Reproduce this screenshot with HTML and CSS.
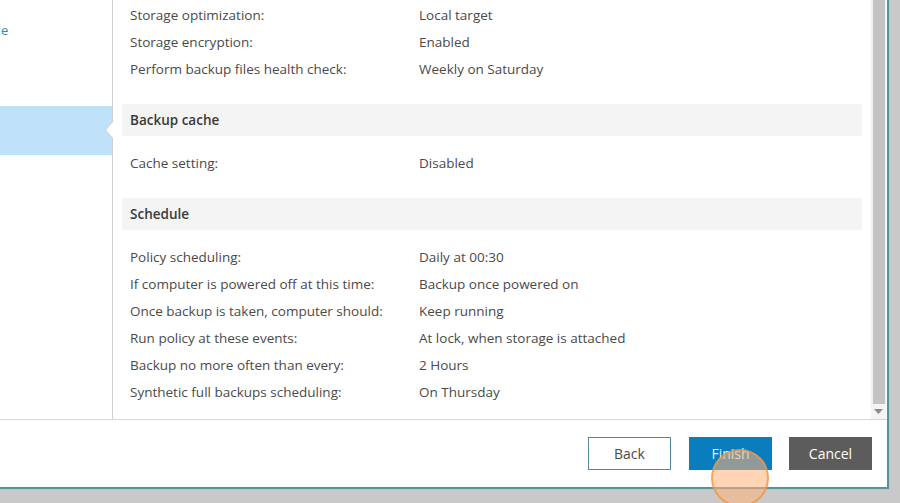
FILE: index.html
```html
<!DOCTYPE html>
<html lang="en">
<head>
<meta charset="utf-8">
<title>Backup plan wizard - Summary</title>
<link rel="stylesheet" href="styles.css">
</head>
<body>
<div class="dialog">
  <div class="main">
    <nav class="nav">
      <div class="nav-item visited">Backup schedule</div>
      <div class="nav-item">Alerts</div>
      <div class="nav-item selected">Summary</div>
    </nav>
    <div class="content">
      <div class="summary">
        <div class="rows rows-first">
          <div class="row"><span class="label">Storage optimization:</span><span class="value">Local target</span></div>
          <div class="row"><span class="label">Storage encryption:</span><span class="value">Enabled</span></div>
          <div class="row"><span class="label">Perform backup files health check:</span><span class="value">Weekly on Saturday</span></div>
        </div>
        <div class="section-title">Backup cache</div>
        <div class="rows">
          <div class="row"><span class="label">Cache setting:</span><span class="value">Disabled</span></div>
        </div>
        <div class="section-title">Schedule</div>
        <div class="rows">
          <div class="row"><span class="label">Policy scheduling:</span><span class="value">Daily at 00:30</span></div>
          <div class="row"><span class="label">If computer is powered off at this time:</span><span class="value">Backup once powered on</span></div>
          <div class="row"><span class="label">Once backup is taken, computer should:</span><span class="value">Keep running</span></div>
          <div class="row"><span class="label">Run policy at these events:</span><span class="value">At lock, when storage is attached</span></div>
          <div class="row"><span class="label">Backup no more often than every:</span><span class="value">2 Hours</span></div>
          <div class="row"><span class="label">Synthetic full backups scheduling:</span><span class="value">On Thursday</span></div>
        </div>
      </div>
      <div class="scrollbar">
        <div class="thumb"></div>
        <div class="arrow-down"><svg width="9" height="5" viewBox="0 0 9 5"><path d="M0 0H9L4.5 5Z" fill="#8a8a8a"/></svg></div>
      </div>
    </div>
  </div>
  <div class="footer">
    <button class="btn btn-back">Back</button>
    <button class="btn btn-finish">Finish</button>
    <button class="btn btn-cancel">Cancel</button>
    <span class="click-marker"></span>
  </div>
</div>
</body>
</html>
```

FILE: styles.css
```css
html, body {
  margin: 0;
  padding: 0;
  height: 100%;
  overflow: hidden;
  background: #c9c9c9;
}

body {
  font-family: "Open Sans", "Noto Sans", "DejaVu Sans", sans-serif;
  font-size: 13.5px;
  color: #4a4a4a;
}

/* dialog window, partly outside the visible area on the left */
.dialog {
  position: relative;
  margin-left: -118px;
  width: 1005px;
  height: 487px;
  background: #fff;
  border-right: 2px solid #5a909d;
  border-bottom: 2px solid #5a909d;
  display: flex;
  flex-direction: column;
  box-shadow: 1px 1px 0 #9fd0da;
}

.main {
  display: flex;
  height: 419px;
  border-bottom: 1px solid #d6d6d6;
}

/* wizard step list */
.nav {
  width: 231px;
  flex: none;
  border-right: 1px solid #d0d0d0;
  padding-top: 8px;
  box-sizing: border-box;
  position: relative;
}

.nav-item {
  height: 49px;
  padding: 14px 0 0 24px;
  box-sizing: border-box;
  font-size: 13px;
  color: #4a4a4a;
  position: relative;
  white-space: nowrap;
}

.nav-item.visited {
  color: #2e8cab;
  padding-top: 13px;
}

.nav-item.selected {
  background: #bfe1fa;
  color: #333;
}

/* notch pointing into the selected step */
.nav-item.selected::after {
  content: "";
  position: absolute;
  right: -1px;
  top: 16px;
  border-style: solid;
  border-width: 8px 7px 8px 0;
  border-color: transparent #fff transparent transparent;
}

.nav-item.selected::before {
  content: "";
  position: absolute;
  right: -1px;
  top: 15px;
  border-style: solid;
  border-width: 9px 8px 9px 0;
  border-color: transparent #d0d0d0 transparent transparent;
}

/* summary area */
.content {
  flex: 1;
  display: flex;
  min-width: 0;
}

.summary {
  flex: 1;
  padding: 1px 9px 0 9px;
  overflow: hidden;
}

.rows {
  padding-top: 13px;
  padding-bottom: 22px;
}

.rows-first {
  padding-top: 0;
}

.row {
  display: flex;
  height: 27px;
  align-items: center;
  padding-left: 8px;
  white-space: nowrap;
}

.label {
  width: 289px;
  flex: none;
}

.section-title {
  height: 32px;
  line-height: 32px;
  background: #f4f4f4;
  padding-left: 8px;
  font-weight: 600;
  color: #3a3a3a;
}

/* vertical scrollbar */
.scrollbar {
  width: 15px;
  flex: none;
  margin-right: 1px;
  display: flex;
  flex-direction: column;
  background: #f0f0f0;
}

.thumb {
  flex: 1;
  margin: 0 1px 0 2px;
  background: #c3c3c3;
}

.arrow-down {
  height: 15px;
  display: flex;
  align-items: center;
  justify-content: center;
  background: #f4f4f4;
}

/* footer buttons */
.footer {
  flex: 1;
  display: flex;
  align-items: flex-start;
  justify-content: flex-end;
  padding: 17px 15px 0 0;
  gap: 17px;
  position: relative;
}

.btn {
  width: 83px;
  height: 33px;
  font-family: inherit;
  font-size: 14px;
  border: 1px solid transparent;
  padding: 0;
  margin: 0;
  cursor: pointer;
}

.btn-back {
  background: #fff;
  border-color: #4b8d9e;
  color: #4a4a4a;
  margin-right: 1px;
}

.btn-finish {
  background: #0a7dbf;
  border-color: #0a7dbf;
  color: #dff6ff;
}

.btn-cancel {
  background: #5c5c5c;
  border-color: #5c5c5c;
  color: #fff;
}

/* pointer click indicator */
.click-marker {
  position: absolute;
  left: 829px;
  top: 29px;
  width: 54px;
  height: 54px;
  border-radius: 50%;
  background: rgba(255, 178, 120, 0.55);
  border: 2px solid rgba(236, 150, 70, 0.75);
}
```
